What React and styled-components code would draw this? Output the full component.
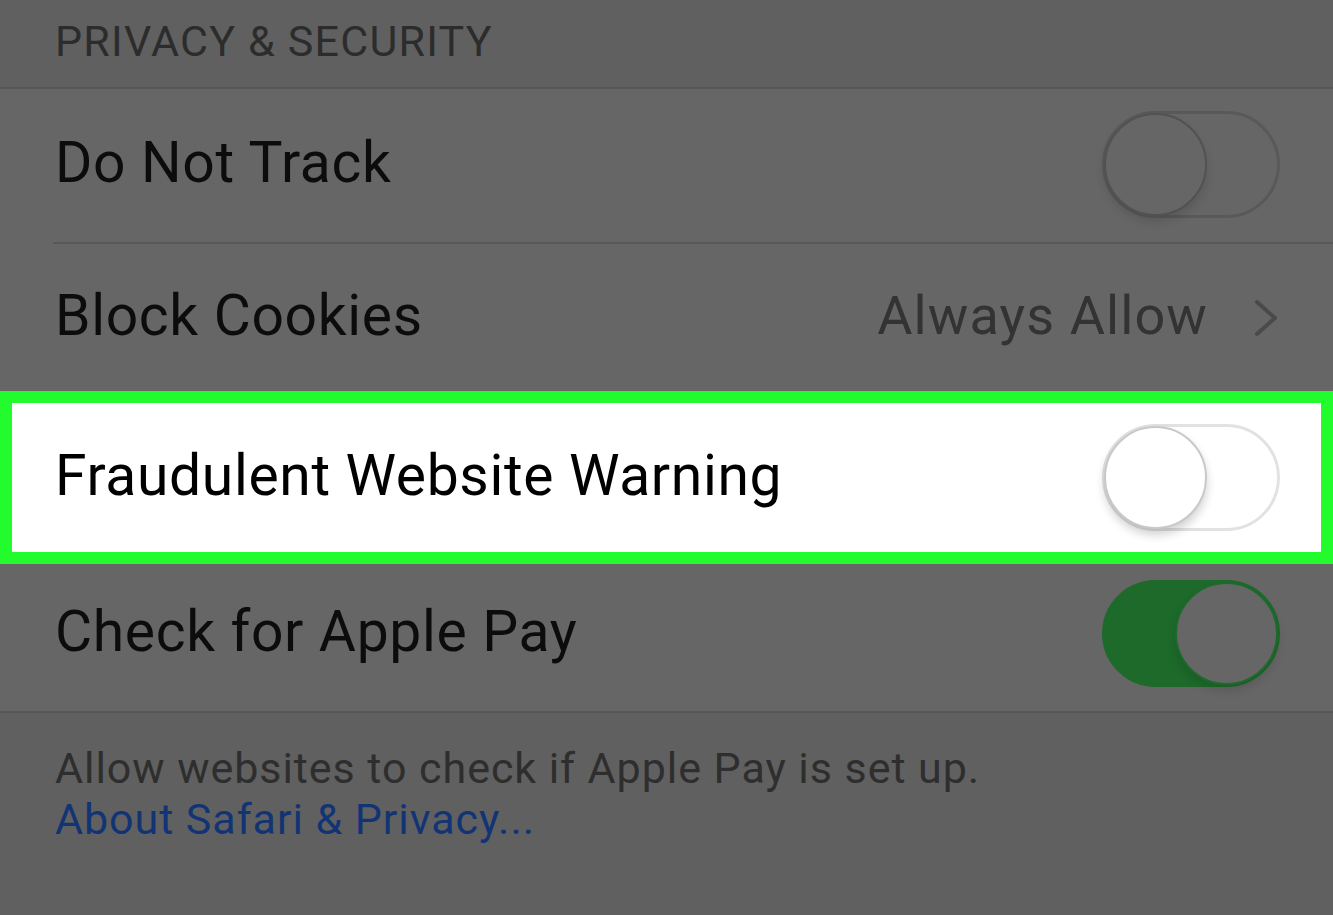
import React from "react";
import styled, { createGlobalStyle } from "styled-components";

const GlobalStyle = createGlobalStyle`
  html, body {
    margin: 0;
    padding: 0;
    background: #606060;
  }
  body {
    font-family: Roboto, "Noto Sans", "Liberation Sans", sans-serif;
  }
`;

const Page = styled.div`
  width: 1333px;
  height: 915px;
  overflow: hidden;
  background: #606060;
  display: flex;
  flex-direction: column;
`;

const Header = styled.div`
  height: 89px;
  box-sizing: border-box;
  padding: 0 0 6px 55px;
  display: flex;
  align-items: center;
  font-size: 43px;
  letter-spacing: 1.2px;
  color: #2c2c2c;
  border-bottom: 2px solid #575757;
`;

const Group = styled.div`
  background: #666666;
  display: flex;
  flex-direction: column;
  border-bottom: 2px solid #565656;
`;

const Row = styled.div`
  height: ${(p) => p.h}px;
  display: flex;
  align-items: center;
  padding: 0 53px ${(p) => p.pb || 0}px 55px;
  position: relative;
  box-sizing: border-box;
  background: ${(p) => (p.lit ? "#ffffff" : "transparent")};
  ${(p) =>
    p.lit &&
    `
    border: 12px solid #22fb2c;
    padding: 0 41px 0 43px;
  `}
  ${(p) =>
    p.sep &&
    `
    &:after {
      content: "";
      position: absolute;
      left: 53px;
      right: 0;
      bottom: 0;
      height: 2px;
      background: #585858;
    }
  `}
`;

const Label = styled.div`
  flex: 1;
  font-size: 57px;
  letter-spacing: 0.65px;
  color: ${(p) => (p.lit ? "#000" : "#0c0c0c")};
  padding-bottom: 4px;
`;

const Detail = styled.div`
  font-size: 54px;
  letter-spacing: 1.1px;
  color: #333333;
  margin-right: 44px;
  padding-bottom: 4px;
`;

const Chevron = styled.svg`
  width: 28px;
  height: 40px;
`;

const Track = styled.div`
  width: 178px;
  height: 107px;
  border-radius: 54px;
  box-sizing: border-box;
  position: relative;
  flex-shrink: 0;
  background: ${(p) => (p.on ? "#1d6a2b" : p.lit ? "#ffffff" : "#666666")};
  border: 3px solid
    ${(p) => (p.on ? "#1d6a2b" : p.lit ? "#e2e2e2" : "#595959")};
`;

const Knob = styled.div`
  position: absolute;
  top: -1px;
  ${(p) => (p.on ? "right: -1px;" : "left: -1px;")}
  width: 103px;
  height: 103px;
  border-radius: 50%;
  box-sizing: border-box;
  background: ${(p) => (p.lit ? "#ffffff" : "#666666")};
  border: 2px solid ${(p) => (p.on ? "#1d6a2b" : p.lit ? "#c9c9c9" : "#525252")};
  box-shadow: ${(p) =>
    p.lit ? "0 6px 10px rgba(0,0,0,0.18)" : "0 6px 10px rgba(0,0,0,0.12)"};
`;

const Toggle = ({ on, lit }) => (
  <Track on={on} lit={lit}>
    <Knob on={on} lit={lit} />
  </Track>
);

const Footer = styled.div`
  padding: 30px 55px 0 55px;
  font-size: 43px;
  line-height: 51px;
  letter-spacing: 0.95px;
`;

const Note = styled.div`
  color: #2e2e2e;
`;

const Link = styled.div`
  color: #123475;
`;

export default function App() {
  return (
    <Page>
      <GlobalStyle />
      <Header>PRIVACY &amp; SECURITY</Header>
      <Group>
        <Row h={155} pb={4} sep>
          <Label>Do Not Track</Label>
          <Toggle />
        </Row>
        <Row h={147}>
          <Label>Block Cookies</Label>
          <Detail>Always Allow</Detail>
          <Chevron viewBox="0 0 28 40">
            <path
              d="M5 4 L23 20 L5 36"
              fill="none"
              stroke="#4a4a4a"
              strokeWidth="4"
              strokeLinecap="round"
              strokeLinejoin="round"
            />
          </Chevron>
        </Row>
        <Row h={173} lit>
          <Label lit>Fraudulent Website Warning</Label>
          <Toggle lit />
        </Row>
        <Row h={147} pb={8}>
          <Label>Check for Apple Pay</Label>
          <Toggle on />
        </Row>
      </Group>
      <Footer>
        <Note>Allow websites to check if Apple Pay is set up.</Note>
        <Link>About Safari &amp; Privacy...</Link>
      </Footer>
    </Page>
  );
}
